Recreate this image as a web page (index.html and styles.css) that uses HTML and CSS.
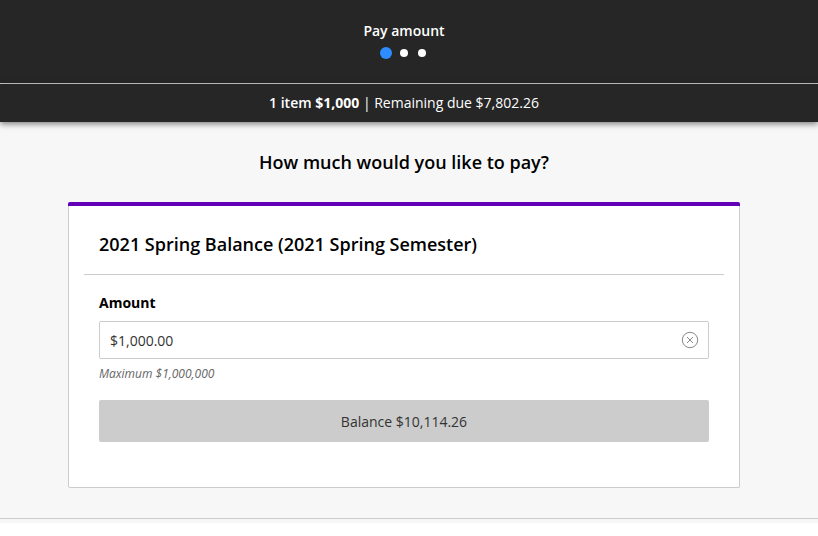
FILE: index.html
```html
<!DOCTYPE html>
<html lang="en">
<head>
  <meta charset="UTF-8">
  <meta name="viewport" content="width=device-width, initial-scale=1.0">
  <title>Pay amount</title>
  <link rel="stylesheet" href="styles.css">
</head>
<body>
  <!-- Step header -->
  <header class="header">
    <h1 class="step-title">Pay amount</h1>
    <div class="steps">
      <span class="step active"></span>
      <span class="step"></span>
      <span class="step"></span>
    </div>
  </header>

  <div class="summary">
    <strong>1 item <b>$1,000</b></strong> | Remaining due $7,802.26
  </div>

  <!-- Payment form -->
  <main class="content">
    <h2 class="question">How much would you like to pay?</h2>

    <form class="card">
      <h3 class="card-title">2021 Spring Balance (2021 Spring Semester)</h3>
      <div class="card-body">
        <label class="field-label" for="amount">Amount</label>
        <div class="field">
          <input class="amount" type="text" id="amount" value="$1,000.00" aria-describedby="amount-hint">
          <button class="clear" type="button" aria-label="Clear amount">
            <svg width="18" height="18" viewBox="0 0 18 18" fill="none" stroke="currentColor">
              <circle cx="9" cy="9" r="7.7"/>
              <path d="M6 6l6 6M12 6l-6 6"/>
            </svg>
          </button>
        </div>
        <p class="hint" id="amount-hint">Maximum $1,000,000</p>
        <button class="balance" type="button">Balance $10,114.26</button>
      </div>
    </form>
  </main>

  <footer class="footer"></footer>
</body>
</html>
```

FILE: styles.css
```css
* {
  box-sizing: border-box;
}

body {
  margin: 0;
  font-family: 'Open Sans', 'Noto Sans', sans-serif;
  font-size: 14px;
  line-height: 20px;
  color: #000;
  background: #fff;
}

h1, h2, h3, p {
  margin: 0;
}

.header,
.summary {
  padding-right: 10px;
  text-align: center;
  color: #fff;
  background: #262626;
}

.header {
  padding-top: 21px;
  padding-bottom: 18px;
  border-bottom: 1px solid #ccc;
}

.step-title {
  font-size: 14px;
  font-weight: 600;
}

.steps {
  display: flex;
  align-items: center;
  justify-content: center;
  gap: 10px;
  height: 24px;
  margin-right: 2px;
}

.step {
  width: 8px;
  height: 8px;
  border-radius: 50%;
  background: #fff;
}

.step.active {
  width: 12px;
  height: 12px;
  margin-right: -2px;
  background: #2d8cff;
}

.summary {
  position: relative;
  padding-top: 9px;
  padding-bottom: 9px;
  box-shadow: 0 2px 6px rgba(0, 0, 0, 0.5);
}

.summary strong {
  font-weight: 600;
}

.summary b {
  font-weight: 700;
}

.content {
  padding: 28px 78px 30px 68px;
  background: #f7f7f7;
}

.question {
  margin-bottom: 28px;
  font-size: 18px;
  font-weight: 600;
  line-height: 24px;
  text-align: center;
}

.card {
  padding: 0 15px 45px;
  background: #fff;
  border: 1px solid #ccc;
  border-top: 0;
  border-radius: 2px;
}

/* purple bar over the full width of the card */
.card::before {
  content: '';
  display: block;
  height: 4px;
  margin: 0 -16px;
  border-radius: 2px 2px 0 0;
  background: #6200b8;
}

.card-title {
  padding: 26px 15px 18px;
  font-size: 18px;
  font-weight: 600;
  line-height: 24px;
  border-bottom: 1px solid #ccc;
}

.card-body {
  padding: 18px 15px 0;
}

.field-label {
  display: block;
  margin-bottom: 8px;
  font-weight: 700;
}

.field {
  display: flex;
  align-items: center;
  height: 38px;
  padding: 0 9px 0 10px;
  border: 1px solid #ccc;
  border-radius: 2px;
}

.amount {
  flex: 1;
  min-width: 0;
  padding: 2px 0 0;
  border: 0;
  outline: 0;
  font: inherit;
  color: #333;
  background: none;
}

.clear {
  display: flex;
  padding: 0;
  border: 0;
  color: #888;
  background: none;
  cursor: pointer;
}

.hint {
  margin: 5px 0 16px;
  font-size: 12px;
  font-style: italic;
  color: #666;
}

.balance {
  display: block;
  width: 100%;
  height: 42px;
  padding: 2px 0 0;
  border: 0;
  border-radius: 2px;
  font: inherit;
  color: #333;
  background: #ccc;
  cursor: pointer;
}

.footer {
  height: 5px;
  border-top: 1px solid #ccc;
  background: #f7f7f7;
}
```
